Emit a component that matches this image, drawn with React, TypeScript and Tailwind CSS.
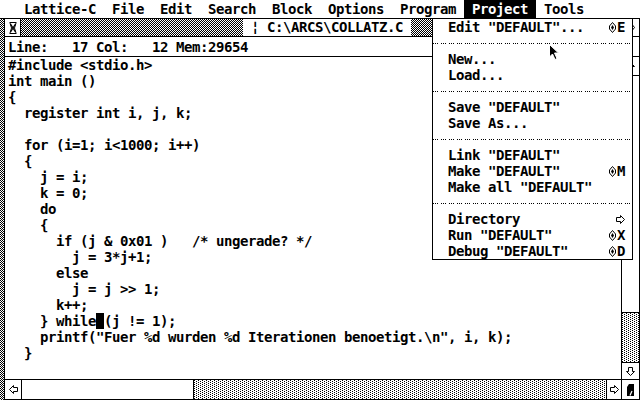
import type { ReactNode } from 'react';

const mono =
  "font-['DejaVu_Sans_Mono',monospace] text-[14px] leading-[16px] tracking-[-0.43px] font-bold";
const checker = 'bg-[image:repeating-conic-gradient(#000_0_25%,#fff_0_50%)] bg-[length:2px_2px]';
const dots =
  'bg-white bg-[image:conic-gradient(at_1px_1px,transparent_75%,#000_0),conic-gradient(at_1px_1px,transparent_75%,#000_0)] bg-[length:4px_2px] bg-[position:0_0,2px_1px]';

const TITLES = ['Lattice-C', 'File', 'Edit', 'Search', 'Block', 'Options', 'Program', 'Project', 'Tools'];

const CODE = [
  '#include <stdio.h>',
  'int main ()',
  '{',
  '  register int i, j, k;',
  '',
  '  for (i=1; i<1000; i++)',
  '  {',
  '    j = i;',
  '    k = 0;',
  '    do',
  '    {',
  '      if (j & 0x01 )   /* ungerade? */',
  '        j = 3*j+1;',
  '      else',
  '        j = j >> 1;',
  '      k++;',
  'CURSOR',
  '    printf("Fuer %d wurden %d Iterationen benoetigt.\\n", i, k);',
  '  }',
];

type Item = { label: string; key?: string; sub?: boolean } | null;

const MENU: Item[] = [
  { label: 'Edit "DEFAULT"...', key: 'E' },
  null,
  { label: 'New...' },
  { label: 'Load...' },
  null,
  { label: 'Save "DEFAULT"' },
  { label: 'Save As...' },
  null,
  { label: 'Link "DEFAULT"' },
  { label: 'Make "DEFAULT"', key: 'M' },
  { label: 'Make all "DEFAULT"' },
  null,
  { label: 'Directory', sub: true },
  { label: 'Run "DEFAULT"', key: 'X' },
  { label: 'Debug "DEFAULT"', key: 'D' },
];

function Arrow({ dir }: { dir: 'up' | 'down' | 'left' | 'right' }) {
  const rot = { up: '', down: 'rotate-180', left: '-rotate-90', right: 'rotate-90' }[dir];
  return (
    <svg width="9" height="9" viewBox="0 0 9 9" className={rot}>
      <path
        d="M4.5 0.5 L8.5 4.5 L6.5 4.5 L6.5 8.5 L2.5 8.5 L2.5 4.5 L0.5 4.5 Z"
        fill="#fff"
        stroke="#000"
        strokeWidth="1"
      />
    </svg>
  );
}

function Shift() {
  return (
    <svg width="7" height="11" viewBox="0 0 7 11" className="mr-[1px]">
      <path d="M3.5 0.5 L6.5 4 L6.5 7 L3.5 10.5 L0.5 7 L0.5 4 Z" fill="#fff" stroke="#000" />
      <path d="M3.5 3 L5 5.5 L3.5 8 L2 5.5 Z" fill="#000" />
    </svg>
  );
}

function Box({ className, children }: { className: string; children?: ReactNode }) {
  return <div className={`flex shrink-0 items-center justify-center ${className}`}>{children}</div>;
}

function Separator() {
  return (
    <div className="flex h-[16px] items-center">
      <div className="h-px w-full bg-[image:repeating-linear-gradient(90deg,#000_0_1px,#fff_1px_2px,#000_2px_3px,#fff_3px_4px,#000_4px_5px,#fff_5px_8px)]" />
    </div>
  );
}

export default function App() {
  return (
    <div className={`relative h-[400px] w-[640px] overflow-hidden bg-white text-black ${mono}`}>
      {/* menu bar */}
      <div className="flex h-[19px] border-b border-black pl-[16px]">
        {TITLES.map((t) => (
          <span
            key={t}
            className={`h-[18px] px-[8px] leading-[18px] ${t === 'Project' ? 'bg-black text-white' : ''}`}
          >
            {t}
          </span>
        ))}
      </div>

      <div className="flex h-[381px]">
        <div className={`w-[4px] shrink-0 ${checker}`} />

        {/* editor window */}
        <div className="flex flex-1 flex-col border-x border-b border-black">
          <div className="flex h-[18px] border-b border-black">
            <Box className="w-[16px] border-r border-black">
              <svg width="8" height="12" viewBox="0 0 8 12">
                <path d="M0.5 0.5 H7.5 M0.5 11.5 H7.5" stroke="#000" />
                <path d="M1 1 Q4 6 1 11 M7 1 Q4 6 7 11" stroke="#000" fill="none" />
                <path d="M1.5 2 L6.5 10 M6.5 2 L1.5 10" stroke="#000" strokeWidth="1.4" />
              </svg>
            </Box>
            <div className={`w-[222px] shrink-0 ${checker}`} />
            <div className="whitespace-pre bg-white px-[8px]">¦ C:\ARCS\COLLATZ.C</div>
            <div className={`flex-1 ${checker}`} />
            <Box className="w-[18px] border-l border-black">
              <svg width="9" height="11" viewBox="0 0 9 11">
                <path d="M4.5 0.5 L8.5 5.5 L4.5 10.5 L0.5 5.5 Z" fill="#fff" stroke="#000" />
                <path d="M4.5 3 L6.5 5.5 L4.5 8 L2.5 5.5 Z" fill="#000" />
              </svg>
            </Box>
          </div>

          <div className="flex h-[20px] items-center whitespace-pre border-b border-black pl-[3px]">
            Line:   17 Col:   12 Mem:29654
          </div>

          <div className="flex h-[322px]">
            <div className="flex-1 overflow-hidden whitespace-pre pl-[3px]">
              {CODE.map((l, i) =>
                l === 'CURSOR' ? (
                  <div key={i} className="h-[16px]">
                    {'    } while'}
                    <span className="bg-black"> </span>
                    {'(j != 1);'}
                  </div>
                ) : (
                  <div key={i} className="h-[16px]">
                    {l}
                  </div>
                ),
              )}
            </div>
            <div className="flex w-[18px] shrink-0 flex-col border-l border-black">
              <Box className="h-[19px] border-b border-black">
                <Arrow dir="up" />
              </Box>
              <div className="h-[237px] shrink-0 border-b border-black bg-white" />
              <div className={`flex-1 ${dots}`} />
              <Box className="h-[17px] border-t border-black">
                <Arrow dir="down" />
              </Box>
            </div>
          </div>

          <div className="flex h-[20px] border-t border-black">
            <Box className="w-[17px] border-r border-black">
              <Arrow dir="left" />
            </Box>
            <div className="w-[172px] shrink-0 border-r border-black bg-white" />
            <div className={`flex-1 ${dots}`} />
            <Box className="w-[15px] border-l border-black">
              <Arrow dir="right" />
            </Box>
            <Box className="w-[18px] border-l border-black">
              <svg width="9" height="14" viewBox="0 0 9 14">
                <path d="M3 1 H8 V13 H1 V4 Z" fill="#000" />
                <path d="M4 12.5 L6 8" stroke="#fff" strokeWidth="1.2" />
              </svg>
            </Box>
          </div>
        </div>
      </div>

      {/* Project drop-down */}
      <div className="absolute left-[432px] top-[18px] h-[242px] w-[201px] border border-black bg-white">
        {MENU.map((m, i) =>
          m === null ? (
            <Separator key={i} />
          ) : (
            <div key={i} className="flex h-[16px] items-center justify-between whitespace-pre pl-[15px] pr-[7px]">
              <span>{m.label}</span>
              {m.key && (
                <span className="flex items-center">
                  <Shift />
                  {m.key}
                </span>
              )}
              {m.sub && <Arrow dir="right" />}
            </div>
          ),
        )}
      </div>

      {/* mouse pointer */}
      <svg className="absolute left-[549px] top-[44px]" width="11" height="17" viewBox="0 0 11 17">
        <path
          d="M0.5 0.5 L0.5 13 L3.5 10 L6 15.5 L8 14.5 L5.5 9 L9.5 9 Z"
          fill="#000"
          stroke="#fff"
          strokeWidth="1"
        />
      </svg>
    </div>
  );
}
